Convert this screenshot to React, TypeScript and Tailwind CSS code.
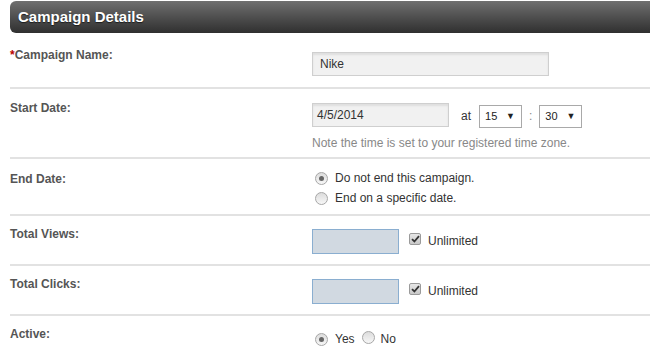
import React from "react";

const Radio = ({ checked }: { checked?: boolean }) => (
  <span className="inline-flex h-[13px] w-[13px] shrink-0 items-center justify-center rounded-full border border-[#a7a7a7] bg-gradient-to-b from-[#dcdcdc] to-[#f7f7f7]">
    {checked && <span className="h-[5px] w-[5px] rounded-full bg-[#666]" />}
  </span>
);

const Check = () => (
  <span className="inline-flex h-[12px] w-[12px] shrink-0 items-center justify-center rounded-[2px] border border-[#9a9a9a] bg-gradient-to-b from-[#e6e6e6] to-[#c9c9c9]">
    <svg width="9" height="8" viewBox="0 0 9 8">
      <path d="M1 4.2 L3.4 6.5 L8 1.2" fill="none" stroke="#333" strokeWidth="1.8" />
    </svg>
  </span>
);

const Select = ({ value }: { value: string }) => (
  <div className="flex h-[23px] w-[43px] items-center justify-between border border-[#a9a9a9] bg-white pl-[5px] pr-[6px] text-[11px] text-[#222]">
    <span>{value}</span>
    <span className="text-[9px]">▼</span>
  </div>
);

const Label = ({ children, pt }: { children: React.ReactNode; pt: string }) => (
  <div className={`w-[302px] shrink-0 text-[12px] font-bold leading-[14px] text-[#555] ${pt}`}>{children}</div>
);

const App = () => {
  return (
    <div className="h-[348px] w-[650px] overflow-hidden bg-white pl-[10px] font-['Liberation_Sans',Arial,sans-serif] text-[12px] text-[#333]">
      <div className="mt-px flex h-[32px] items-center rounded-l-[6px] bg-gradient-to-b from-[#707070] to-[#303030] pl-[8px] text-[15px] font-bold text-white [text-shadow:0_1px_1px_rgba(0,0,0,0.6)]">
        Campaign Details
      </div>

      <div className="flex h-[56px] border-b-2 border-[#e2e2e2]">
        <Label pt="pt-[15px]">
          <span className="text-[#b00]">*</span>Campaign Name:
        </Label>
        <div className="pt-[19px]">
          <div className="flex h-[24px] w-[237px] items-center border border-[#cfcfcf] bg-[#f1f1f1] pl-[7px] shadow-[inset_0_2px_2px_rgba(0,0,0,0.08)]">
            Nike
          </div>
        </div>
      </div>

      <div className="flex h-[70px] border-b-2 border-[#e2e2e2]">
        <Label pt="pt-[12px]">Start Date:</Label>
        <div className="pt-[12px]">
          <div className="flex items-center">
            <div className="flex h-[24px] w-[137px] items-center border border-[#cfcfcf] bg-[#f1f1f1] pl-[4px] shadow-[inset_0_2px_2px_rgba(0,0,0,0.08)]">
              4/5/2014
            </div>
            <span className="ml-[12px] mr-[8px] mt-[2px]">at</span>
            <div className="mt-[4px]">
              <Select value="15" />
            </div>
            <span className="mx-[7px] mt-[2px] text-[#888]">:</span>
            <div className="mt-[4px]">
              <Select value="30" />
            </div>
          </div>
          <div className="mt-[6px] text-[#888]">Note the time is set to your registered time zone.</div>
        </div>
      </div>

      <div className="flex h-[57px] border-b-2 border-[#e2e2e2]">
        <Label pt="pt-[13px]">End Date:</Label>
        <div className="pt-[9px] pl-[3px] leading-[20px]">
          <div className="flex items-center gap-[7px]">
            <Radio checked />
            <span>Do not end this campaign.</span>
          </div>
          <div className="flex items-center gap-[7px]">
            <Radio />
            <span>End on a specific date.</span>
          </div>
        </div>
      </div>

      {["Total Views:", "Total Clicks:"].map((l) => (
        <div key={l} className="flex h-[50px] border-b-2 border-[#e2e2e2]">
          <Label pt="pt-[11px]">{l}</Label>
          <div className="flex items-center pt-[13px] self-start">
            <div className="h-[25px] w-[87px] border border-[#8aaed0] bg-[#d1d9e1]" />
            <span className="ml-[10px] mt-[-6px]">
              <Check />
            </span>
            <span className="ml-[7px] mt-[-2px]">Unlimited</span>
          </div>
        </div>
      ))}

      <div className="flex">
        <Label pt="pt-[11px]">Active:</Label>
        <div className="flex items-center pt-[15px] pl-[3px] leading-[14px]">
          <Radio checked />
          <span className="ml-[7px]">Yes</span>
          <span className="ml-[7px]">
            <Radio />
          </span>
          <span className="ml-[6px]">No</span>
        </div>
      </div>
    </div>
  );
};

export default App;
